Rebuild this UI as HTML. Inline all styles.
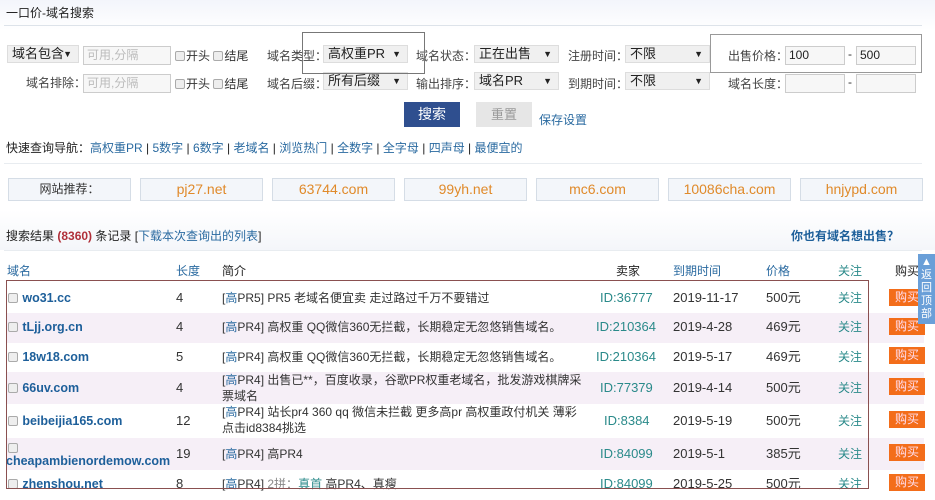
<!DOCTYPE html>
<html><head><meta charset="utf-8">
<style>
*{margin:0;padding:0;box-sizing:border-box}
body{width:935px;height:500px;overflow:hidden;position:relative;background:#fff;font-family:"Liberation Sans","Noto Sans CJK SC",sans-serif;font-size:12px;color:#333}
.a{position:absolute;white-space:nowrap;line-height:16px}
.sel{position:absolute;height:18px;background:#f0f0f0;border:1px solid #ddd;font-size:13px;line-height:16px;padding-left:4px;color:#222;overflow:hidden}
.sel:after{content:"▼";position:absolute;right:6px;top:0;font-size:9px}
.inp{position:absolute;height:19px;background:#f7f7f7;border:1px solid #ccc;color:#bbb;font-size:12px;line-height:17px;padding-left:3px}
.cb{display:inline-block;width:10px;height:10px;border:1px solid #aaa;background:#eee;vertical-align:-1px;margin-right:1px;border-radius:2px}
.lnk{color:#2a6aa0}
.rec{position:absolute;top:178px;height:23px;width:123px;border:1px solid #d5dde6;background:#f3f6fa;color:#e08a2a;font-size:14px;text-align:center;line-height:21px}
.row{position:absolute;left:6px;width:918px}
.pink{background:#f6eff7}
.dom{color:#1d5f9a;font-weight:bold;font-size:12.5px}
.buy{position:absolute;left:889px;width:36px;height:17px;background:#f36d1a;color:#fde;font-size:12px;text-align:center;line-height:17px}
.g{color:#2a8a8a}
.t{font-size:13px}
</style></head><body>
<div style="position:absolute;left:0;top:0;width:935px;height:100px;background:linear-gradient(#f3f5fb,#fff 30%)"></div>
<div class="a" style="left:6px;top:5px;font-size:12px;color:#222">一口价-域名搜索</div>
<div style="position:absolute;left:4px;top:25px;width:918px;border-top:1px solid #dde3ea"></div>

<div class="sel" style="left:7px;top:45px;width:72px;padding-right:14px">域名包含</div>
<div class="inp" style="left:83px;top:46px;width:88px">可用,分隔</div>
<div class="a" style="left:175px;top:48px"><span class="cb"></span>开头 <span class="cb"></span>结尾</div>
<div class="a" style="left:267px;top:48px;color:#444">域名类型：</div>
<div class="sel" style="left:323px;top:45px;width:85px">高权重PR</div>
<div class="a" style="left:416px;top:48px;color:#444">域名状态：</div>
<div class="sel" style="left:474px;top:45px;width:85px">正在出售</div>
<div class="a" style="left:568px;top:48px;color:#444">注册时间：</div>
<div class="sel" style="left:625px;top:45px;width:85px">不限</div>
<div class="a" style="left:728px;top:48px;color:#444">出售价格：</div>
<div class="inp" style="left:785px;top:46px;width:60px;color:#222">100</div>
<div class="a" style="left:848px;top:46px">-</div>
<div class="inp" style="left:856px;top:46px;width:60px;color:#222">500</div>

<div class="a" style="left:26px;top:75px;color:#444">域名排除：</div>
<div class="inp" style="left:83px;top:74px;width:88px">可用,分隔</div>
<div class="a" style="left:175px;top:76px"><span class="cb"></span>开头 <span class="cb"></span>结尾</div>
<div class="a" style="left:267px;top:76px;color:#444">域名后缀：</div>
<div class="sel" style="left:323px;top:72px;width:85px">所有后缀</div>
<div class="a" style="left:416px;top:76px;color:#444">输出排序：</div>
<div class="sel" style="left:474px;top:72px;width:85px">域名PR</div>
<div class="a" style="left:568px;top:76px;color:#444">到期时间：</div>
<div class="sel" style="left:625px;top:72px;width:85px">不限</div>
<div class="a" style="left:728px;top:76px;color:#444">域名长度：</div>
<div class="inp" style="left:785px;top:74px;width:60px"></div>
<div class="a" style="left:848px;top:74px">-</div>
<div class="inp" style="left:856px;top:74px;width:60px"></div>

<div style="position:absolute;left:302px;top:32px;width:123px;height:42px;border:1px solid #777"></div>
<div style="position:absolute;left:710px;top:34px;width:212px;height:39px;border:1px solid #999"></div>

<div class="a" style="left:404px;top:102px;width:56px;height:25px;background:#2f4f8f;color:#fff;font-size:14px;text-align:center;line-height:25px">搜索</div>
<div class="a" style="left:476px;top:102px;width:56px;height:25px;background:#e6e6e6;color:#999;font-size:13px;text-align:center;line-height:25px">重置</div>
<div class="a lnk" style="left:539px;top:112px">保存设置</div>

<div class="a" style="left:6px;top:140px;color:#222">快速查询导航：<span class="lnk">高权重PR</span> | <span class="lnk">5数字</span> | <span class="lnk">6数字</span> | <span class="lnk">老域名</span> | <span class="lnk">浏览热门</span> | <span class="lnk">全数字</span> | <span class="lnk">全字母</span> | <span class="lnk">四声母</span> | <span class="lnk">最便宜的</span></div>
<div style="position:absolute;left:4px;top:163px;width:918px;border-top:1px solid #e8ecf0"></div>

<div class="rec" style="left:8px;color:#333;font-size:12px">网站推荐：</div>
<div class="rec" style="left:140px">pj27.net</div>
<div class="rec" style="left:272px">63744.com</div>
<div class="rec" style="left:404px">99yh.net</div>
<div class="rec" style="left:536px">mc6.com</div>
<div class="rec" style="left:668px">10086cha.com</div>
<div class="rec" style="left:800px">hnjypd.com</div>

<div style="position:absolute;left:0;top:210px;width:935px;height:40px;background:linear-gradient(#fff,#f4f6fa)"></div>
<div class="a" style="left:6px;top:228px;color:#222">搜索结果 <b style="color:#b0303a">(8360)</b> 条记录 [<span class="lnk">下载本次查询出的列表</span>]</div>
<div class="a" style="left:791px;top:228px;color:#1d5f9a;font-weight:bold">你也有域名想出售？</div>
<div style="position:absolute;left:4px;top:250px;width:918px;border-top:1px solid #e8ecf0"></div>

<div class="a lnk" style="left:7px;top:263px">域名</div>
<div class="a lnk" style="left:176px;top:263px">长度</div>
<div class="a" style="left:222px;top:263px;color:#222">简介</div>
<div class="a" style="left:616px;top:263px;color:#222">卖家</div>
<div class="a lnk" style="left:673px;top:263px">到期时间</div>
<div class="a lnk" style="left:766px;top:263px">价格</div>
<div class="a g" style="left:838px;top:263px">关注</div>
<div class="a" style="left:895px;top:263px;color:#222">购买</div>

<div class="row" style="top:283px;height:30px"></div>
<div class="row pink" style="top:313px;height:30px"></div>
<div class="row" style="top:343px;height:29px"></div>
<div class="row pink" style="top:372px;height:32px"></div>
<div class="row" style="top:404px;height:34px"></div>
<div class="row pink" style="top:438px;height:32px"></div>
<div class="row" style="top:470px;height:30px"></div>

<div class="a" style="left:8px;top:290px"><span class="cb"></span> <span class="dom">wo31.cc</span></div>
<div class="a t" style="left:176px;top:290px">4</div>
<div class="a" style="left:222px;top:290px">[<span class="lnk">高</span>PR5] PR5 老域名便宜卖 走过路过千万不要错过</div>
<div class="a g t" style="left:600px;top:290px">ID:36777</div>
<div class="a t" style="left:673px;top:290px">2019-11-17</div>
<div class="a t" style="left:766px;top:290px">500元</div>
<div class="a g" style="left:838px;top:290px">关注</div>
<div class="buy" style="top:289px">购买</div>

<div class="a" style="left:8px;top:319px"><span class="cb"></span> <span class="dom">tLjj.org.cn</span></div>
<div class="a t" style="left:176px;top:319px">4</div>
<div class="a" style="left:222px;top:319px">[<span class="lnk">高</span>PR4] 高权重 QQ微信360无拦截，长期稳定无忽悠销售域名。</div>
<div class="a g t" style="left:596px;top:319px">ID:210364</div>
<div class="a t" style="left:673px;top:319px">2019-4-28</div>
<div class="a t" style="left:766px;top:319px">469元</div>
<div class="a g" style="left:838px;top:319px">关注</div>
<div class="buy" style="top:318px">购买</div>

<div class="a" style="left:8px;top:349px"><span class="cb"></span> <span class="dom">18w18.com</span></div>
<div class="a t" style="left:176px;top:349px">5</div>
<div class="a" style="left:222px;top:349px">[<span class="lnk">高</span>PR4] 高权重 QQ微信360无拦截，长期稳定无忽悠销售域名。</div>
<div class="a g t" style="left:596px;top:349px">ID:210364</div>
<div class="a t" style="left:673px;top:349px">2019-5-17</div>
<div class="a t" style="left:766px;top:349px">469元</div>
<div class="a g" style="left:838px;top:349px">关注</div>
<div class="buy" style="top:347px">购买</div>

<div class="a" style="left:8px;top:380px"><span class="cb"></span> <span class="dom">66uv.com</span></div>
<div class="a t" style="left:176px;top:380px">4</div>
<div class="a" style="left:222px;top:372px">[<span class="lnk">高</span>PR4] 出售已**，百度收录，谷歌PR权重老域名，批发游戏棋牌采<br>票域名</div>
<div class="a g t" style="left:600px;top:380px">ID:77379</div>
<div class="a t" style="left:673px;top:380px">2019-4-14</div>
<div class="a t" style="left:766px;top:380px">500元</div>
<div class="a g" style="left:838px;top:380px">关注</div>
<div class="buy" style="top:378px">购买</div>

<div class="a" style="left:8px;top:413px"><span class="cb"></span> <span class="dom">beibeijia165.com</span></div>
<div class="a t" style="left:176px;top:413px">12</div>
<div class="a" style="left:222px;top:404px">[<span class="lnk">高</span>PR4] 站长pr4 360 qq 微信未拦截 更多高pr 高权重政付机关 薄彩<br>点击id8384挑选</div>
<div class="a g t" style="left:604px;top:413px">ID:8384</div>
<div class="a t" style="left:673px;top:413px">2019-5-19</div>
<div class="a t" style="left:766px;top:413px">500元</div>
<div class="a g" style="left:838px;top:413px">关注</div>
<div class="buy" style="top:411px">购买</div>

<div class="a" style="left:8px;top:440px"><span class="cb"></span></div>
<div class="a dom" style="left:6px;top:453px">cheapambienordemow.com</div>
<div class="a t" style="left:176px;top:446px">19</div>
<div class="a" style="left:222px;top:446px">[<span class="lnk">高</span>PR4] 高PR4</div>
<div class="a g t" style="left:600px;top:446px">ID:84099</div>
<div class="a t" style="left:673px;top:446px">2019-5-1</div>
<div class="a t" style="left:766px;top:446px">385元</div>
<div class="a g" style="left:838px;top:446px">关注</div>
<div class="buy" style="top:444px">购买</div>

<div class="a" style="left:8px;top:476px"><span class="cb"></span> <span class="dom">zhenshou.net</span></div>
<div class="a t" style="left:176px;top:476px">8</div>
<div class="a" style="left:222px;top:476px">[<span class="lnk">高</span>PR4] <span style="color:#888">2拼：</span><span class="g">真首</span> 高PR4、真瘦</div>
<div class="a g t" style="left:600px;top:476px">ID:84099</div>
<div class="a t" style="left:673px;top:476px">2019-5-25</div>
<div class="a t" style="left:766px;top:476px">500元</div>
<div class="a g" style="left:838px;top:476px">关注</div>
<div class="buy" style="top:474px">购买</div>

<div style="position:absolute;left:6px;top:280px;width:863px;height:209px;border:1px solid #8a5050"></div>

<div class="a" style="left:918px;top:254px;width:17px;height:70px;background:#6a9fd8;color:#fff;font-size:11px;line-height:13px;text-align:center;white-space:normal;padding-top:2px">▲返回顶部</div>
</body></html>
